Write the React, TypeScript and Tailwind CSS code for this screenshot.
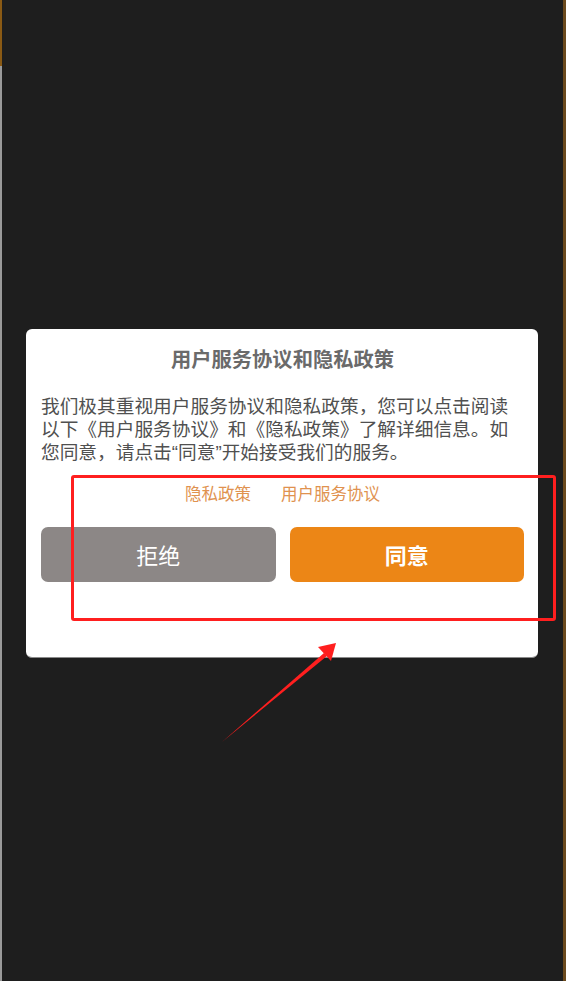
import React from "react";

const font = { fontFamily: '"Noto Sans CJK SC", "Noto Sans", sans-serif' };
const latin = { fontFamily: '"Liberation Sans", sans-serif' };

export default function App() {
  return (
    <div
      className="relative w-full h-[981px] overflow-hidden bg-[#1e1e1e] pt-[329px] pl-[26px] pr-[28px]"
      style={font}
    >
      {/* edge slivers */}
      <div className="absolute left-0 top-0 w-[2px] h-[66px] bg-[#8a5a14]" />
      <div className="absolute left-0 top-[66px] w-[2px] h-[915px] bg-[#9a9a9a]" />
      <div className="absolute right-0 top-0 w-[3px] h-full bg-[#6b4a1e]" />

      <div className="w-full rounded-[6px] bg-white border-b border-[#8a8a8a] pt-[16px] pb-[75px] pl-[15px] pr-[14px]">
        <div className="text-center text-[20.3px] leading-[26px] font-bold text-[#6a6a6a]">
          用户服务协议和隐私政策
        </div>
        <div className="mt-[22px] text-[18.7px] leading-[23px] text-[#505050]">
          <div className="whitespace-nowrap">我们极其重视用户服务协议和隐私政策，您可以点击阅读</div>
          <div className="whitespace-nowrap">以下《用户服务协议》和《隐私政策》了解详细信息。如</div>
          <div className="whitespace-nowrap">
            您同意，请点击<span style={latin}>“</span>同意<span style={latin}>”</span>开始接受我们的服务。
          </div>
        </div>
        <div className="mt-[17px] flex justify-center gap-[30px] text-[16.5px] leading-[24px] text-[#e0924f]">
          <span>隐私政策</span>
          <span>用户服务协议</span>
        </div>
        <div className="mt-[22px] flex gap-[14px]">
          <button className="flex-1 h-[55px] rounded-[7px] bg-[#8c8786] text-white text-[22px] flex items-center justify-center">
            拒绝
          </button>
          <button className="flex-1 h-[55px] rounded-[7px] bg-[#ec8616] text-white text-[22px] font-bold flex items-center justify-center">
            同意
          </button>
        </div>
      </div>

      {/* annotation box */}
      <div className="absolute left-[71px] top-[475px] w-[485px] h-[146px] border-[3px] border-[#ff1f1f] rounded-[3px]" />

      {/* annotation arrow */}
      <svg className="absolute left-0 top-0" width="566" height="981" viewBox="0 0 566 981">
        <polygon points="222,742 324,653 327,656" fill="#ff1f1f" />
        <polygon points="336,643 318,647 331,661" fill="#ff1f1f" />
      </svg>
    </div>
  );
}
